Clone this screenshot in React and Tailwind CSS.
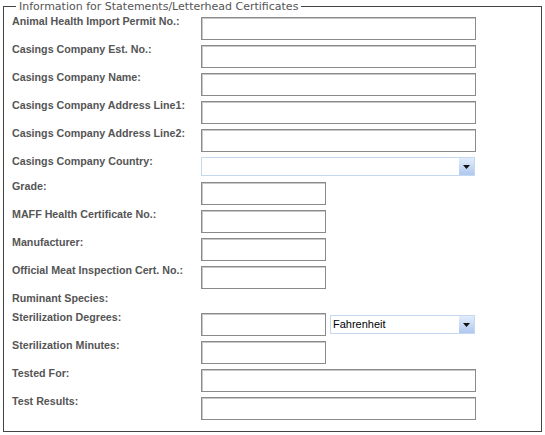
const FULL = 'w-[275px]'
const SHORT = 'w-[125px]'

const rows = [
  { label: 'Animal Health Import Permit No.:', field: 'full' },
  { label: 'Casings Company Est. No.:', field: 'full' },
  { label: 'Casings Company Name:', field: 'full' },
  { label: 'Casings Company Address Line1:', field: 'full' },
  { label: 'Casings Company Address Line2:', field: 'full' },
  { label: 'Casings Company Country:', field: 'select' },
  { label: 'Grade:', field: 'short' },
  { label: 'MAFF Health Certificate No.:', field: 'short' },
  { label: 'Manufacturer:', field: 'short' },
  { label: 'Official Meat Inspection Cert. No.:', field: 'short' },
  { label: 'Ruminant Species:', field: 'none' },
  { label: 'Sterilization Degrees:', field: 'degrees' },
  { label: 'Sterilization Minutes:', field: 'short' },
  { label: 'Tested For:', field: 'full' },
  { label: 'Test Results:', field: 'full' },
]

function TextBox({ width }) {
  return (
    <input
      type="text"
      className={`${width} h-[23px] border border-[#8a8a8a] bg-white px-1 text-[11px] shadow-[inset_1px_1px_0_#c8c8c8] outline-none`}
    />
  )
}

function Dropdown({ width, value }) {
  return (
    <div className={`${width} flex h-[19px] items-stretch border border-[#c4d8f2] bg-white`}>
      <span className="flex-1 truncate pl-[2px] text-[11px] leading-[17px] text-black">{value}</span>
      <span className="flex w-[15px] items-center justify-center bg-gradient-to-b from-[#e3edfb] to-[#afc8ee]">
        <svg width="7" height="4" viewBox="0 0 7 4">
          <path d="M0 0h7L3.5 4z" fill="#111" />
        </svg>
      </span>
    </div>
  )
}

function Row({ label, field }) {
  const height = field === 'select' ? 'h-[25px]' : field === 'none' ? 'h-[19px]' : 'h-[28px]'
  return (
    <div className={`flex items-start ${height}`}>
      <label className="mt-[2px] w-[189px] shrink-0 text-[10.7px] font-bold leading-[13px] text-[#555]">{label}</label>
      <div className="mt-[4px] flex items-center gap-[4px]">
        {field === 'full' && <TextBox width={FULL} />}
        {field === 'short' && <TextBox width={SHORT} />}
        {field === 'select' && <Dropdown width="w-[274px]" />}
        {field === 'degrees' && (
          <>
            <TextBox width={SHORT} />
            <Dropdown width="w-[145px]" value="Fahrenheit" />
          </>
        )}
      </div>
    </div>
  )
}

export default function App() {
  return (
    <div className="h-[435px] w-[545px] bg-white px-[3px] font-['Liberation_Sans',Arial,sans-serif]">
      <fieldset className="h-[432px] border border-[#444] px-[8px]">
        <legend className="ml-[4px] px-[3px] font-['DejaVu_Sans',sans-serif] text-[11px] leading-[13px] text-[#555]">
          Information for Statements/Letterhead Certificates
        </legend>
        <div className="flex flex-col">
          {rows.map((r) => (
            <Row key={r.label} {...r} />
          ))}
        </div>
      </fieldset>
    </div>
  )
}
